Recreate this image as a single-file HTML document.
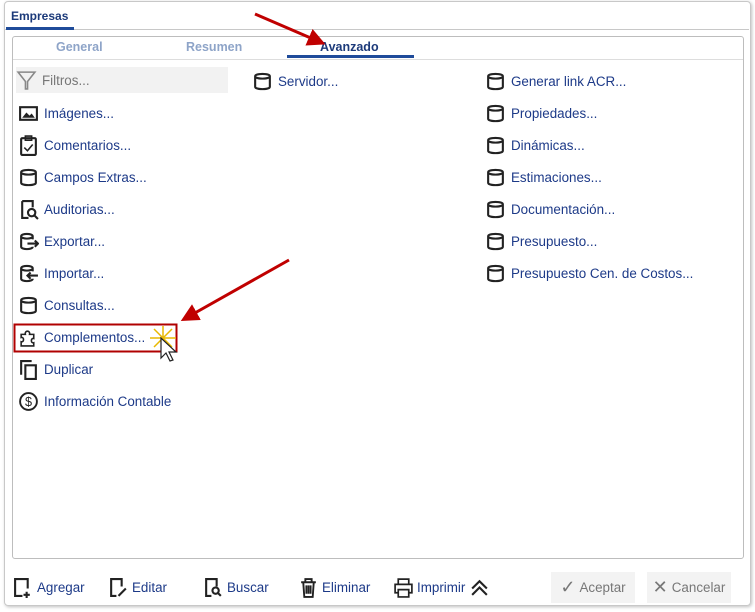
<!DOCTYPE html>
<html><head><style>
body{margin:0;width:755px;height:612px;background:#fff;font-family:"Liberation Sans",sans-serif;position:relative;overflow:hidden}
.outer{position:absolute;left:4px;top:1px;width:745px;height:603px;border:1px solid #c8c8c8;border-radius:4px;box-shadow:1px 1px 3px rgba(0,0,0,.25)}
.hdrline{position:absolute;left:5px;top:29px;width:744px;border-top:1px solid #c8c8c8}
.emp{position:absolute;left:11px;top:9px;font-size:12px;font-weight:bold;color:#1c3a7a}
.empu{position:absolute;left:6px;top:27px;width:68px;height:3px;background:#1f4b9a}
.panel{position:absolute;left:12px;top:36px;width:730px;height:521px;border:1px solid #bdbdbd;border-radius:3px}
.tabline{position:absolute;left:13px;top:59px;width:730px;border-top:1px solid #ddd}
.tab{position:absolute;top:40px;font-size:12.5px;font-weight:bold;color:#8ea4c8}
.av{color:#1c3a7a}
.avu{position:absolute;left:287px;top:55px;width:127px;height:3px;background:#1f4b9a}
.it{position:absolute;height:26px;display:flex;align-items:center;font-size:13.4px;color:#1d3a88}
.it svg{width:21px;height:21px;margin-right:5px;flex:none}
.btn{position:absolute;top:577px;font-size:13.4px;color:#1d3a88;display:flex;align-items:center}
.btn svg{width:21px;height:21px;margin-right:3px}
.gb{position:absolute;top:572px;height:31px;background:#f3f3f3;color:#777;font-size:13.4px;display:flex;align-items:center;justify-content:center}
</style></head><body>
<div class="outer"></div><div class="hdrline"></div>
<div class="emp">Empresas</div><div class="empu"></div>
<div class="panel"></div><div class="tabline"></div>
<div class="tab" style="left:56px">General</div>
<div class="tab" style="left:186px">Resumen</div>
<div class="tab av" style="left:320px">Avanzado</div>
<div class="avu"></div>
<svg style="position:absolute;left:0;top:0" width="755" height="612">
<defs><marker id="a" markerWidth="6" markerHeight="6" refX="4" refY="3" orient="auto"><path d="M0,0 L6,3 L0,6z" fill="#c00000"/></marker></defs>
<line x1="255" y1="14" x2="320" y2="42" stroke="#c00000" stroke-width="3" marker-end="url(#a)"/>
<line x1="289" y1="260" x2="186" y2="318" stroke="#c00000" stroke-width="3" marker-end="url(#a)"/>
<rect x="14.5" y="324.5" width="162" height="27" fill="none" stroke="#b00000" stroke-width="2"/>
<g stroke="#e8b800" stroke-width="1.5"><line x1="150" y1="338" x2="176" y2="338"/><line x1="163" y1="326" x2="163" y2="350"/><line x1="154" y1="329" x2="172" y2="347"/><line x1="172" y1="329" x2="154" y2="347"/></g>
<path d="M161,338 L161,358 L166,353 L170,361 L173,360 L169,352 L176,352 Z" fill="#fff" stroke="#222" stroke-width="1.2"/>
</svg>
<div class="it" style="left:16px;top:67px;width:212px;background:#f2f2f2;color:#777"><svg viewBox="0 0 20 20"><path d="M2 2H18L11 11V18H9V11Z" fill="none" stroke="#888" stroke-width="1.5"/></svg>Filtros...</div>
<div class="it" style="left:18px;top:100px"><svg viewBox="0 0 20 20"><rect x="2" y="4" width="16" height="12" fill="none" stroke="#222" stroke-width="2"/><path d="M4 14L8 9L11 12L13 10L16 14Z" fill="#222"/></svg>Imágenes...</div>
<div class="it" style="left:18px;top:132px"><svg viewBox="0 0 20 20"><rect x="3" y="3" width="14" height="16" rx="1" fill="none" stroke="#222" stroke-width="2"/><path d="M7 1h6v4H7z M6 12l3 3 5-6" fill="none" stroke="#222" stroke-width="1.5"/></svg>Comentarios...</div>
<div class="it" style="left:18px;top:164px"><svg viewBox="0 0 20 20"><path d="M3 5v10c0 3 14 3 14 0V5M3 5c0-3 14-3 14 0s-14 3-14 0" fill="none" stroke="#222" stroke-width="2"/></svg>Campos Extras...</div>
<div class="it" style="left:18px;top:196px"><svg viewBox="0 0 20 20"><path d="M4 2h10v6M4 2v16h6" fill="none" stroke="#222" stroke-width="2"/><circle cx="13" cy="13" r="3.5" fill="none" stroke="#222" stroke-width="2"/><path d="M15.5 15.5L19 19" stroke="#222" stroke-width="2"/></svg>Auditorias...</div>
<div class="it" style="left:18px;top:228px"><svg viewBox="0 0 20 20"><path d="M14 8V5c0-3-11-3-11 0v10c0 3 11 3 11 0M3 5c0 3 11 3 11 0M9 12h10M16 9l3 3-3 3" fill="none" stroke="#222" stroke-width="2"/></svg>Exportar...</div>
<div class="it" style="left:18px;top:260px"><svg viewBox="0 0 20 20"><path d="M14 8V5c0-3-11-3-11 0v10c0 3 11 3 11 0M3 5c0 3 11 3 11 0M9 12h10M12 9l-3 3 3 3" fill="none" stroke="#222" stroke-width="2"/></svg>Importar...</div>
<div class="it" style="left:18px;top:292px"><svg viewBox="0 0 20 20"><path d="M3 5v10c0 3 14 3 14 0V5M3 5c0-3 14-3 14 0s-14 3-14 0" fill="none" stroke="#222" stroke-width="2"/></svg>Consultas...</div>
<div class="it" style="left:18px;top:324px"><svg viewBox="0 0 20 20"><path d="M3 7h4c-1-4 5-4 4 0h4v4c-3-1-3 5 0 4v3H3v-4c3 1 3-5 0-4z" fill="none" stroke="#222" stroke-width="1.5"/></svg>Complementos...</div>
<div class="it" style="left:18px;top:356px"><svg viewBox="0 0 20 20"><path d="M3 15V2h10" fill="none" stroke="#222" stroke-width="2"/><rect x="7" y="6" width="10" height="13" fill="none" stroke="#222" stroke-width="2"/></svg>Duplicar</div>
<div class="it" style="left:18px;top:388px"><svg viewBox="0 0 20 20"><circle cx="10" cy="10" r="8" fill="none" stroke="#222" stroke-width="1.8"/><text x="10" y="14.5" font-size="12" text-anchor="middle" font-family="Liberation Sans" fill="#222">$</text></svg>Información Contable</div>
<div class="it" style="left:252px;top:68px"><svg viewBox="0 0 20 20"><path d="M3 5v10c0 3 14 3 14 0V5M3 5c0-3 14-3 14 0s-14 3-14 0" fill="none" stroke="#222" stroke-width="2"/></svg>Servidor...</div>
<div class="it" style="left:485px;top:68px"><svg viewBox="0 0 20 20"><path d="M3 5v10c0 3 14 3 14 0V5M3 5c0-3 14-3 14 0s-14 3-14 0" fill="none" stroke="#222" stroke-width="2"/></svg>Generar link ACR...</div>
<div class="it" style="left:485px;top:100px"><svg viewBox="0 0 20 20"><path d="M3 5v10c0 3 14 3 14 0V5M3 5c0-3 14-3 14 0s-14 3-14 0" fill="none" stroke="#222" stroke-width="2"/></svg>Propiedades...</div>
<div class="it" style="left:485px;top:132px"><svg viewBox="0 0 20 20"><path d="M3 5v10c0 3 14 3 14 0V5M3 5c0-3 14-3 14 0s-14 3-14 0" fill="none" stroke="#222" stroke-width="2"/></svg>Dinámicas...</div>
<div class="it" style="left:485px;top:164px"><svg viewBox="0 0 20 20"><path d="M3 5v10c0 3 14 3 14 0V5M3 5c0-3 14-3 14 0s-14 3-14 0" fill="none" stroke="#222" stroke-width="2"/></svg>Estimaciones...</div>
<div class="it" style="left:485px;top:196px"><svg viewBox="0 0 20 20"><path d="M3 5v10c0 3 14 3 14 0V5M3 5c0-3 14-3 14 0s-14 3-14 0" fill="none" stroke="#222" stroke-width="2"/></svg>Documentación...</div>
<div class="it" style="left:485px;top:228px"><svg viewBox="0 0 20 20"><path d="M3 5v10c0 3 14 3 14 0V5M3 5c0-3 14-3 14 0s-14 3-14 0" fill="none" stroke="#222" stroke-width="2"/></svg>Presupuesto...</div>
<div class="it" style="left:485px;top:260px"><svg viewBox="0 0 20 20"><path d="M3 5v10c0 3 14 3 14 0V5M3 5c0-3 14-3 14 0s-14 3-14 0" fill="none" stroke="#222" stroke-width="2"/></svg>Presupuesto Cen. de Costos...</div>
<div class="btn" style="left:13px"><svg viewBox="0 0 20 20"><path d="M9 18H2V2h12v9M13 14v6M10 17h6" fill="none" stroke="#222" stroke-width="2"/></svg>Agregar</div>
<div class="btn" style="left:108px"><svg viewBox="0 0 20 20"><path d="M8 18H3V2h10v7M10 18l7-7" fill="none" stroke="#222" stroke-width="2"/></svg>Editar</div>
<div class="btn" style="left:203px"><svg viewBox="0 0 20 20"><path d="M8 18H3V2h10v7" fill="none" stroke="#222" stroke-width="2"/><circle cx="12" cy="13" r="3" fill="none" stroke="#222" stroke-width="2"/><path d="M14 15l3 3" stroke="#222" stroke-width="2"/></svg>Buscar</div>
<div class="btn" style="left:298px"><svg viewBox="0 0 20 20"><path d="M3 5h14M7 5V2h6v3M5 5l1 14h8l1-14M8 8v8M10 8v8M12 8v8" fill="none" stroke="#222" stroke-width="1.8"/></svg>Eliminar</div>
<div class="btn" style="left:393px"><svg viewBox="0 0 20 20"><path d="M5 7V2h10v5M5 15H2V7h16v8h-3M5 12h10v7H5z" fill="none" stroke="#222" stroke-width="1.6"/></svg>Imprimir<svg viewBox="0 0 20 20" style="margin-left:4px"><path d="M3 11l7-7 7 7M3 17l7-7 7 7" fill="none" stroke="#222" stroke-width="2"/></svg></div>
<div class="gb" style="left:551px;width:84px"><span style="font-size:18px;margin-right:4px">✓</span>Aceptar</div>
<div class="gb" style="left:647px;width:84px"><span style="font-size:18px;margin-right:4px">✕</span>Cancelar</div>
</body></html>
